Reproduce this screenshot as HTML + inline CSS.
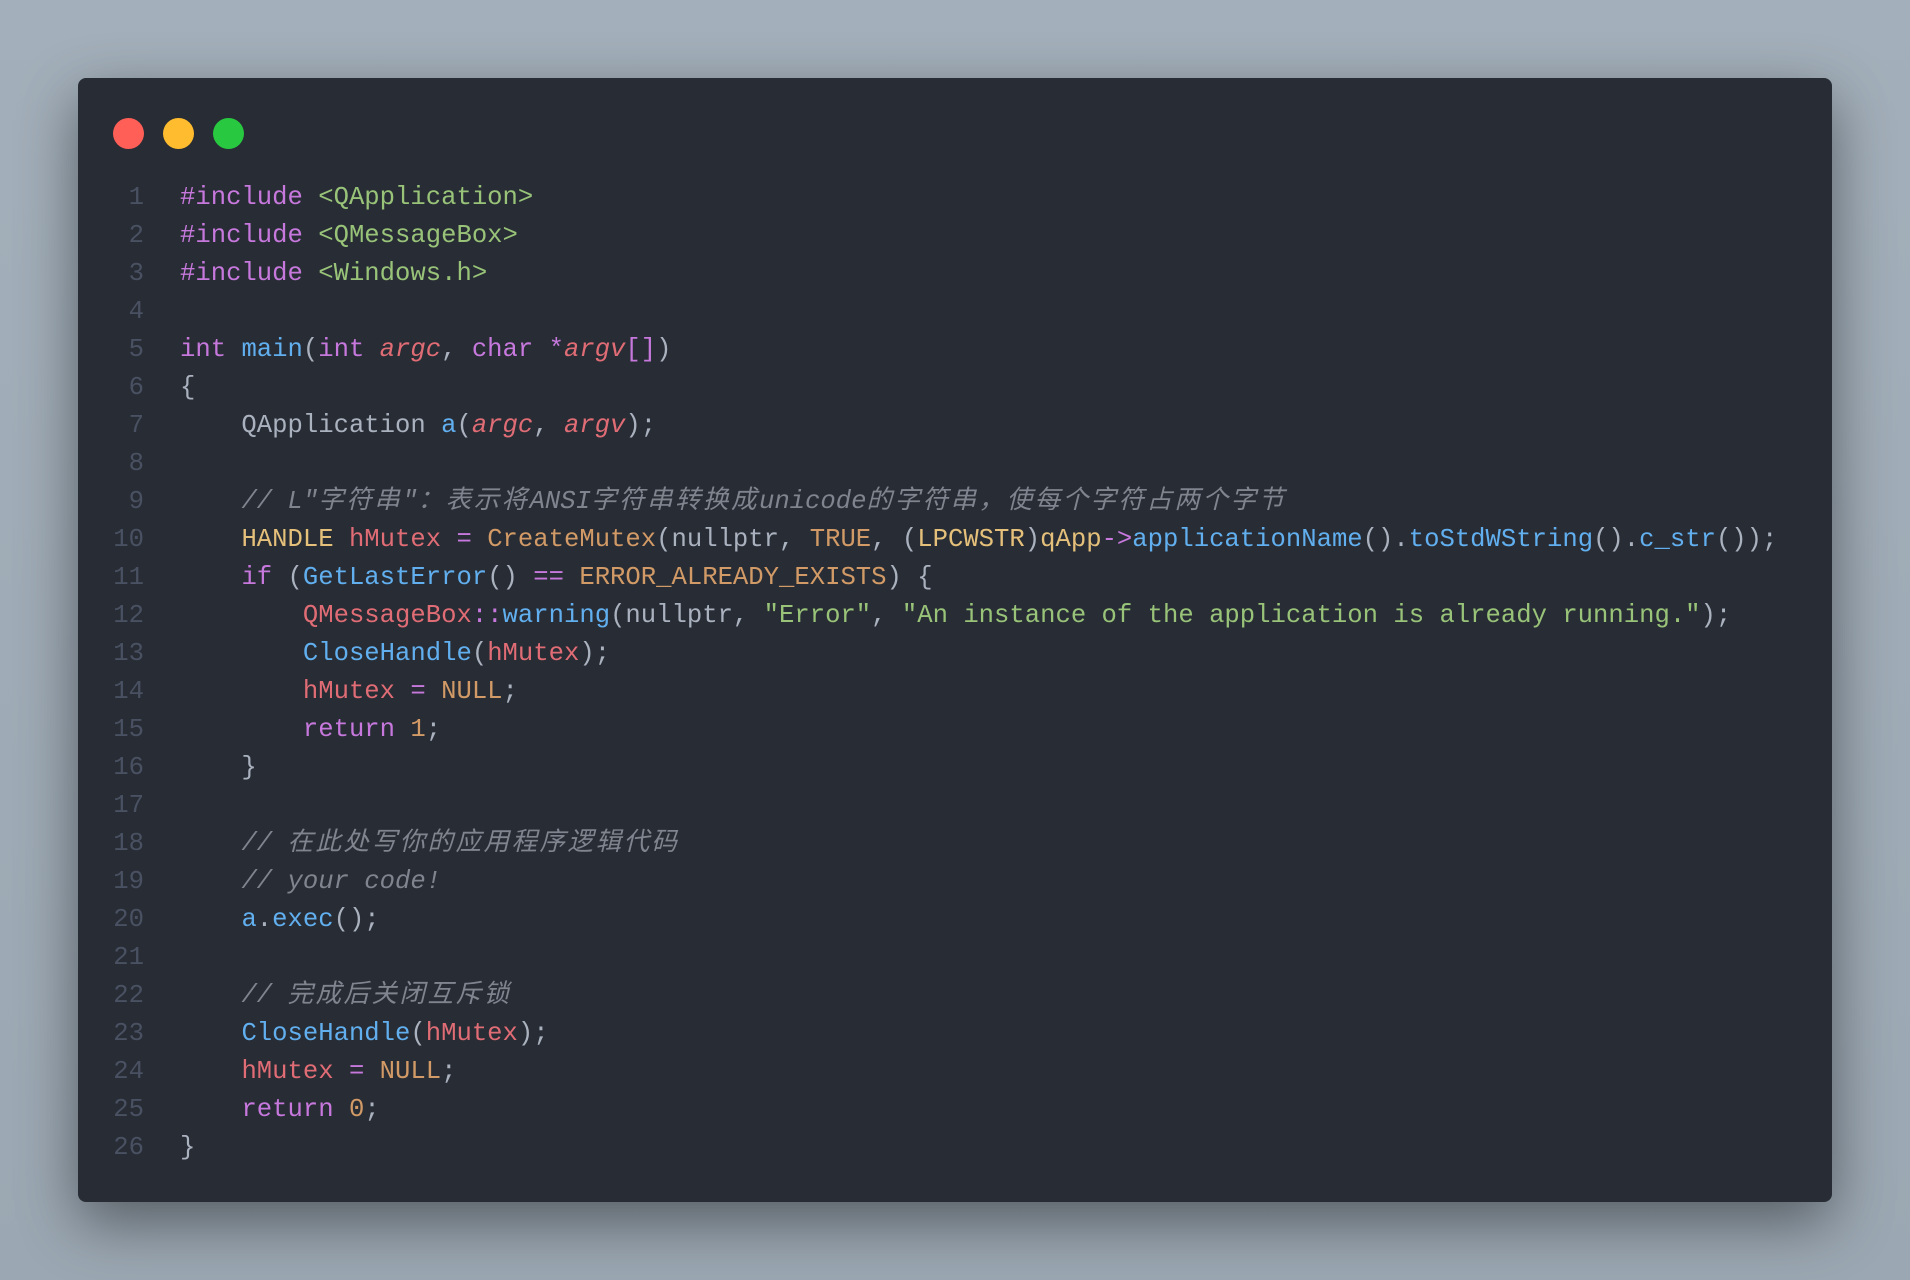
<!DOCTYPE html>
<html><head><meta charset="utf-8"><style>
html,body{margin:0;padding:0;width:1910px;height:1280px;overflow:hidden;background:linear-gradient(180deg,#a3afba,#9ba7b2);}
.win{position:absolute;left:78px;top:78px;width:1754px;height:1124px;background:#282c34;border-radius:8px;box-shadow:0 20px 60px rgba(0,0,0,.45);}
.dot{position:absolute;top:118px;width:31px;height:31px;border-radius:50%;}
pre{position:absolute;left:0;top:179px;margin:0;font-family:"Liberation Mono","Noto Sans CJK SC",monospace;font-size:25.6px;line-height:38px;color:#abb2bf;}
.ln{display:inline-block;width:144px;text-align:right;color:#495162;margin-right:36px;}
.p{color:#c678dd}.g{color:#98c379}.b{color:#61afef}.r{color:#e06c75}.o{color:#d19a66}.y{color:#e5c07b}
.i{font-style:italic}.c{color:#7f848e;font-style:italic}.k{letter-spacing:2.4px}
</style></head><body>
<div class="win"></div>
<div class="dot" style="left:113px;background:#ff5f57"></div>
<div class="dot" style="left:163px;background:#febc2e"></div>
<div class="dot" style="left:213px;background:#28c840"></div>
<pre>
<span class="ln">1</span><span class="p">#include</span> <span class="g">&lt;QApplication&gt;</span>
<span class="ln">2</span><span class="p">#include</span> <span class="g">&lt;QMessageBox&gt;</span>
<span class="ln">3</span><span class="p">#include</span> <span class="g">&lt;Windows.h&gt;</span>
<span class="ln">4</span>
<span class="ln">5</span><span class="p">int</span> <span class="b">main</span>(<span class="p">int</span> <span class="r i">argc</span>, <span class="p">char</span> <span class="p">*</span><span class="r i">argv</span><span class="p">[]</span>)
<span class="ln">6</span>{
<span class="ln">7</span>    QApplication <span class="b">a</span>(<span class="r i">argc</span>, <span class="r i">argv</span>);
<span class="ln">8</span>
<span class="ln">9</span>    <span class="c">// L"<span class="k">字符串</span>"<span class="k">：表示将</span>ANSI<span class="k">字符串转换成</span>unicode<span class="k">的字符串，使每个字符占两个字节</span></span>
<span class="ln">10</span>    <span class="y">HANDLE</span> <span class="r">hMutex</span> <span class="p">=</span> <span class="o">CreateMutex</span>(nullptr, <span class="o">TRUE</span>, (<span class="y">LPCWSTR</span>)<span class="y">qApp</span><span class="p">-&gt;</span><span class="b">applicationName</span>().<span class="b">toStdWString</span>().<span class="b">c_str</span>());
<span class="ln">11</span>    <span class="p">if</span> (<span class="b">GetLastError</span>() <span class="p">==</span> <span class="o">ERROR_ALREADY_EXISTS</span>) {
<span class="ln">12</span>        <span class="r">QMessageBox</span><span class="p">::</span><span class="b">warning</span>(nullptr, <span class="g">"Error"</span>, <span class="g">"An instance of the application is already running."</span>);
<span class="ln">13</span>        <span class="b">CloseHandle</span>(<span class="r">hMutex</span>);
<span class="ln">14</span>        <span class="r">hMutex</span> <span class="p">=</span> <span class="o">NULL</span>;
<span class="ln">15</span>        <span class="p">return</span> <span class="o">1</span>;
<span class="ln">16</span>    }
<span class="ln">17</span>
<span class="ln">18</span>    <span class="c">// <span class="k">在此处写你的应用程序逻辑代码</span></span>
<span class="ln">19</span>    <span class="c">// your code!</span>
<span class="ln">20</span>    <span class="b">a</span>.<span class="b">exec</span>();
<span class="ln">21</span>
<span class="ln">22</span>    <span class="c">// <span class="k">完成后关闭互斥锁</span></span>
<span class="ln">23</span>    <span class="b">CloseHandle</span>(<span class="r">hMutex</span>);
<span class="ln">24</span>    <span class="r">hMutex</span> <span class="p">=</span> <span class="o">NULL</span>;
<span class="ln">25</span>    <span class="p">return</span> <span class="o">0</span>;
<span class="ln">26</span>}
</pre>
</body></html>
